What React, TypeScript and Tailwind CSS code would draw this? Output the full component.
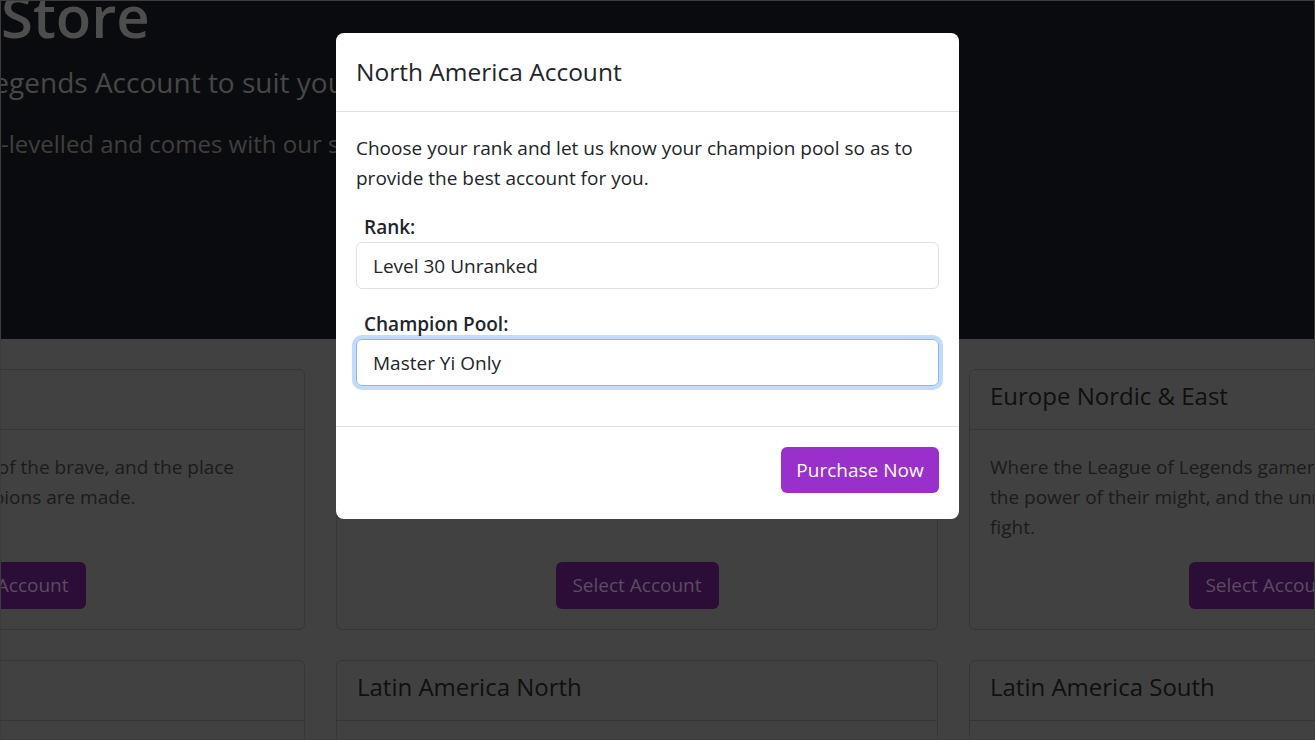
import React from 'react';

const font = { fontFamily: "'Open Sans', 'Noto Sans', sans-serif" };

const regions = [
  {
    name: 'North America',
    text: 'The land of the free, the home of the brave, and the place where all of the greatest champions are made.',
  },
  {
    name: 'Europe West',
    text: 'The heart of competitive play, where legends rise and every match is a battle for glory.',
  },
  {
    name: 'Europe Nordic & East',
    text: 'Where the League of Legends gamers gather together to show the power of their might, and the unrivalled strength of their fight.',
  },
  {
    name: 'Oceania',
    text: 'A small but fierce community with some of the friendliest players on the Rift.',
  },
  {
    name: 'Latin America North',
    text: 'Passion and skill come together in one of the fastest growing regions.',
  },
  {
    name: 'Latin America South',
    text: 'Home of the most dedicated summoners south of the equator.',
  },
];

function RegionCard({ name, text }: { name: string; text: string }) {
  return (
    <div className="flex flex-col rounded-md border border-[#6c6c6c]">
      <div className="flex h-[60px] items-center border-b border-[#6c6c6c] px-5 pb-[7px]">
        <h3 className="text-[24px] text-[#202020]">{name}</h3>
      </div>
      <div className="flex flex-1 flex-col px-5 pt-[22px] pb-5">
        <p className="mb-5 text-[19px] leading-[30px] text-[#383838]">{text}</p>
        <button className="mx-auto mt-auto h-[47px] w-[163px] rounded-md bg-[#561a70] text-[19px] text-[#b696c0]">
          Select Account
        </button>
      </div>
    </div>
  );
}

export default function App() {
  return (
    <div className="relative h-[740px] w-[1315px] overflow-hidden border border-[#3c3c3c] bg-[#828282]" style={font}>
      <div className="-ml-[298px] w-[1868px]">
        {/* Hero */}
        <div className="flex h-[338px] flex-col bg-[#15171c] pl-[55px]">
          <h1 className="-mt-[20px] text-[58px] font-semibold leading-[70px] text-[#9a9a9a]">Account Store</h1>
          <p className="mt-[11px] text-[28px] leading-[40px] text-[#8e8e8e]">
            Find a League of Legends Account to suit your playstyle and budget.
          </p>
          <p className="mt-[24px] text-[24px] leading-[36px] text-[#7f7c7a]">
            Every account is hand-levelled and comes with our standard lifetime warranty.
          </p>
        </div>

        {/* Region cards */}
        <div className="grid grid-cols-3 gap-x-[31px] gap-y-[30px] pt-[30px]">
          {regions.map((r) => (
            <RegionCard key={r.name} {...r} />
          ))}
        </div>
      </div>

      {/* Backdrop */}
      <div className="absolute inset-0 bg-black/50" />

      {/* Modal */}
      <div className="absolute top-[32px] left-[335px] w-[623px] rounded-lg bg-white text-[#212529]">
        <div className="flex h-[79px] items-center border-b border-[#dee2e6] px-5">
          <h2 className="text-[24.5px] font-medium">North America Account</h2>
        </div>
        <div className="px-5 pt-[21px] pb-5">
          <p className="mb-5 text-[19px] leading-[30px]">
            Choose your rank and let us know your champion pool so as to provide the best account for you.
          </p>
          <div className="mb-[21px]">
            <label className="block px-2 text-[19px] font-semibold leading-[29px]">Rank:</label>
            <input
              readOnly
              value="Level 30 Unranked"
              className="block h-[47px] w-full rounded-md border border-[#dee2e6] px-4 text-[19px] outline-none"
            />
          </div>
          <div className="mb-5">
            <label className="block px-2 text-[19px] font-semibold leading-[29px]">Champion Pool:</label>
            <input
              readOnly
              value="Master Yi Only"
              className="block h-[47px] w-full rounded-md border border-[#86b7fe] px-4 text-[19px] shadow-[0_0_0_4px_rgba(13,110,253,0.25)] outline-none"
            />
          </div>
        </div>
        <div className="flex justify-end border-t border-[#dee2e6] px-5 pt-5 pb-[26px]">
          <button className="h-[46px] w-[158px] rounded-md bg-[#9a30cc] text-[19px] text-white">Purchase Now</button>
        </div>
      </div>
    </div>
  );
}
